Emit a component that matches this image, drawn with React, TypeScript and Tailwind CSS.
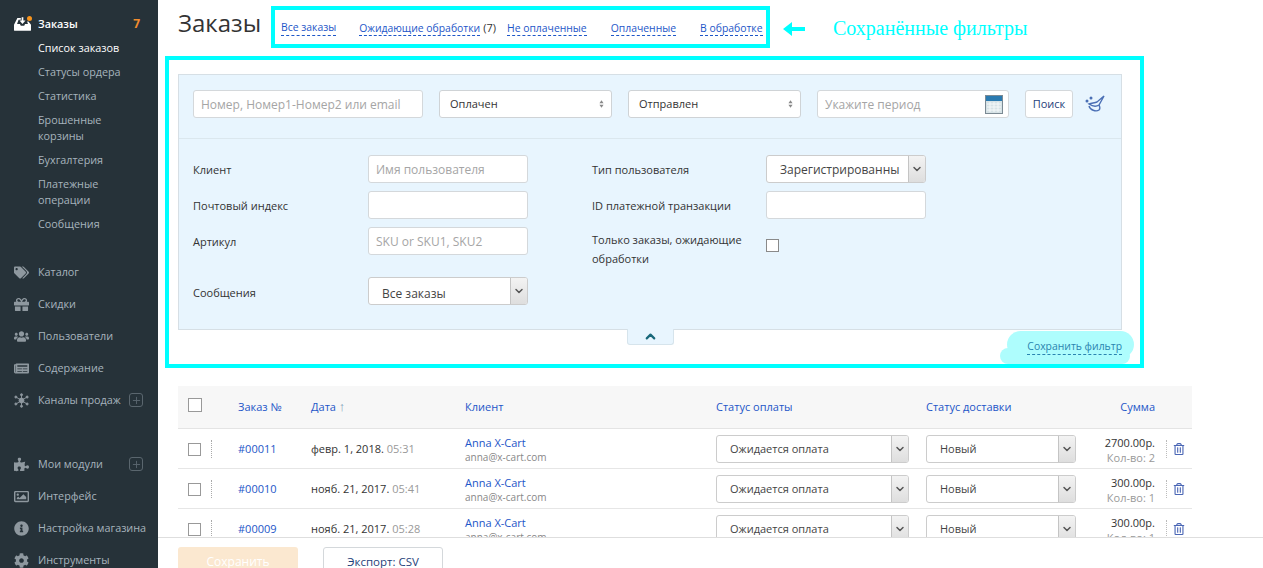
import { FaTags, FaGift, FaUsers, FaNewspaper, FaPuzzlePiece, FaRegImage, FaInfoCircle, FaCog, FaRegTrashAlt } from 'react-icons/fa'
import { ChevronDown, ChevronUp, Plus } from 'lucide-react'
import type { ReactNode } from 'react'

const subItems = [
  { label: 'Список заказов', active: true },
  { label: 'Статусы ордера' },
  { label: 'Статистика' },
  { label: 'Брошенные корзины' },
  { label: 'Бухгалтерия' },
  { label: 'Платежные операции' },
  { label: 'Сообщения' },
]

const orders = [
  { id: '#00011', date: 'февр. 1, 2018.', time: '05:31', sum: '2700.00р.', qty: 'Кол-во: 2' },
  { id: '#00010', date: 'нояб. 21, 2017.', time: '05:41', sum: '300.00р.', qty: 'Кол-во: 1' },
  { id: '#00009', date: 'нояб. 21, 2017.', time: '05:28', sum: '300.00р.', qty: 'Кол-во: 1' },
]

function InboxIcon() {
  return (
    <svg viewBox="0 0 20 16" className="w-[17px] h-[14px] fill-white">
      <path d="M4 1h4v2H5.4L3.6 8H7l1 2h4l1-2h3.4l-1-3H17l3 4v6a1 1 0 0 1-1 1H1a1 1 0 0 1-1-1V9z" />
      <path d="M9 0h2v4h2.5L10 8 6.500 4H9z" />
    </svg>
  )
}

function ChannelsIcon() {
  return (
    <svg viewBox="0 0 16 16" className="w-[15px] h-[15px] fill-current stroke-current" strokeWidth="1">
      <circle cx="8" cy="8" r="2.600" />
      <path d="M8 8V2M8 8v6M8 8L2.500 4.500M8 8l5.500-3.500M8 8l-5.500 3.500M8 8l5.500 3.500" />
      <circle cx="8" cy="1.800" r="1.100" />
      <circle cx="8" cy="14.200" r="1.100" />
      <circle cx="2" cy="4.300" r="1.100" />
      <circle cx="14" cy="4.300" r="1.100" />
      <circle cx="2" cy="11.700" r="1.100" />
      <circle cx="14" cy="11.700" r="1.100" />
    </svg>
  )
}

function MenuItem({ icon, label, plus }: { icon: ReactNode; label: string; plus?: boolean }) {
  return (
    <div className="h-8 flex items-center text-[#a7b4bd]">
      <div className="w-[38px] pl-[14px] text-[#8e989f] text-[15px] shrink-0">{icon}</div>
      <span className="whitespace-nowrap">{label}</span>
      {plus && (
        <span className="ml-auto mr-[15px] w-[14px] h-[14px] border border-[#5a666e] rounded-[3px] flex items-center justify-center text-[#5a666e]">
          <Plus size={11} />
        </span>
      )}
    </div>
  )
}

function Sidebar() {
  return (
    <aside className="w-[158px] shrink-0 h-full bg-[#263239] pt-2 overflow-hidden text-[10.8px] leading-4">
      <div className="h-8 flex items-center text-white font-semibold">
        <div className="relative w-[38px] pl-[14px] shrink-0">
          <InboxIcon />
          <span className="absolute left-[27px] top-[-1px] w-[5px] h-[5px] rounded-full bg-[#f7941d]" />
        </div>
        <span>Заказы</span>
        <span className="ml-auto mr-[18px] text-[#f08c2e] font-bold text-[12px]">7</span>
      </div>
      <div className="-mt-1 mb-5 pl-[38px] pr-[30px]">
        {subItems.map((item) => (
          <div key={item.label} className={`py-1 ${item.active ? 'text-white' : 'text-[#a7b4bd]'}`}>
            {item.label}
          </div>
        ))}
      </div>
      <MenuItem icon={<FaTags />} label="Каталог" />
      <MenuItem icon={<FaGift />} label="Скидки" />
      <MenuItem icon={<FaUsers />} label="Пользователи" />
      <MenuItem icon={<FaNewspaper />} label="Содержание" />
      <MenuItem icon={<ChannelsIcon />} label="Каналы продаж" plus />
      <div className="h-8" />
      <MenuItem icon={<FaPuzzlePiece />} label="Мои модули" plus />
      <MenuItem icon={<FaRegImage />} label="Интерфейс" />
      <MenuItem icon={<FaInfoCircle />} label="Настройка магазина" />
      <MenuItem icon={<FaCog />} label="Инструменты" />
    </aside>
  )
}

function DashLink({ children }: { children: ReactNode }) {
  return <span className="text-[#1d56c8] text-[10.4px] border-b border-dashed border-[#1d56c8] leading-[15px] whitespace-nowrap">{children}</span>
}

function SmallSelect({ label, width }: { label: string; width: string }) {
  return (
    <div className={`${width} h-7 bg-white border border-[#cfd3d6] rounded-[3px] flex items-center justify-between pl-[10px] pr-[7px] text-[#333]`}>
      <span>{label}</span>
      <svg viewBox="0 0 6 9" className="w-[5px] h-[8px] fill-[#888]">
        <path d="M3 0l2.500 3.500h-5zM3 9L.5 5.500h5z" />
      </svg>
    </div>
  )
}

function ArrowSelect({ label, width, size = 'text-[11px]', pad = 'pt-px' }: { label: string; width: string; size?: string; pad?: string }) {
  return (
    <div className={`${width} ${size} h-7 bg-white border border-[#cccccc] rounded-[3px] flex items-stretch text-[#444] overflow-hidden shrink-0`}>
      <span className={`flex-1 pl-[13px] ${pad} flex items-center whitespace-nowrap overflow-hidden`}>{label}</span>
      <span className="w-[17px] shrink-0 bg-gradient-to-b from-[#f3f3f3] to-[#dedede] border-l border-[#c4c4c4] flex items-center justify-center text-[#555]">
        <ChevronDown size={12} strokeWidth={3} />
      </span>
    </div>
  )
}

function TextInput({ placeholder, width }: { placeholder?: string; width: string }) {
  return (
    <input
      placeholder={placeholder}
      className={`${width} text-[12px] h-7 bg-white border border-[#d4d8db] rounded-[3px] px-[7px] outline-none placeholder:text-[#a5a5a5]`}
    />
  )
}

function CalendarIcon() {
  return (
    <svg viewBox="0 0 18 20" className="absolute right-[6px] top-[4px] w-[18px] h-[20px]">
      <rect x="0.500" y="1.500" width="17" height="18" fill="#d6e2e6" stroke="#7b8a94" />
      <rect x="1" y="2" width="16" height="5" fill="#2a7ab0" />
      <path d="M2 10h14M2 13h14M2 16h14M5 8v10M9 8v10M13 8v10" stroke="#f4f8f9" />
    </svg>
  )
}

function BroomIcon() {
  return (
    <svg viewBox="0 0 20 20" className="w-5 h-5 -ml-1 fill-none stroke-[#4a6fb5]" strokeWidth="1.400">
      <path d="M4 10c3 2 7 3 10 1l5-9-7 6c-2 1-5 1-8 2z" />
      <path d="M4 12c1 4 7 6 10 4 1-1 1-3 0-5" />
      <circle cx="2" cy="7" r=".8" />
      <circle cx="6" cy="4" r=".8" />
    </svg>
  )
}

function FilterPanel() {
  return (
    <div className="ml-[7px] w-[979px] h-[312px] border-4 border-[#00ffff] pt-[14px] pl-[9px] pr-[18px] relative">
      <div className="h-[256px] bg-[#e8f5fe] border border-[#d6dfe5]">
        <div className="h-[64px] flex items-start pt-[15px] pl-[14px] gap-4 border-b border-[#dbe7ee]">
          <TextInput placeholder="Номер, Номер1-Номер2 или email" width="w-[230px]" />
          <SmallSelect label="Оплачен" width="w-[173px]" />
          <SmallSelect label="Отправлен" width="w-[173px]" />
          <div className="relative w-[192px]">
            <TextInput placeholder="Укажите период" width="w-full" />
            <CalendarIcon />
          </div>
          <div className="w-12 h-7 bg-white border border-[#d4d8db] rounded-[3px] flex items-center justify-center text-[#1f3f7a]">Поиск</div>
          <div className="h-7 flex items-center"><BroomIcon /></div>
        </div>
        <div className="flex pl-[14px] pt-4 text-[#333]">
          <div className="w-[399px] flex flex-col gap-2">
            <div className="flex items-center h-7">
              <span className="w-[175px] pt-0.5">Клиент</span>
              <TextInput placeholder="Имя пользователя" width="w-[160px]" />
            </div>
            <div className="flex items-center h-7">
              <span className="w-[175px] pt-0.5">Почтовый индекс</span>
              <TextInput width="w-[160px]" />
            </div>
            <div className="flex items-center h-7">
              <span className="w-[175px] pt-0.5">Артикул</span>
              <TextInput placeholder="SKU or SKU1, SKU2" width="w-[160px]" />
            </div>
            <div className="flex items-center h-7 mt-[14px]">
              <span className="w-[175px] pt-[5px]">Сообщения</span>
              <ArrowSelect label="Все заказы" width="w-[160px]" size="text-[12px]" pad="pt-[5px]" />
            </div>
          </div>
          <div className="flex flex-col gap-2">
            <div className="flex items-center h-7">
              <span className="w-[174px] pt-0.5">Тип пользователя</span>
              <ArrowSelect label="Зарегистрированны" width="w-[160px]" size="text-[12px]" pad="pt-[2px]" />
            </div>
            <div className="flex items-center h-7">
              <span className="w-[174px] pt-0.5">ID платежной транзакции</span>
              <TextInput width="w-[160px]" />
            </div>
            <div className="flex items-start pt-[3px]">
              <span className="w-[174px] leading-[19px] pr-4">Только заказы, ожидающие обработки</span>
              <span className="mt-[9px] w-[13px] h-[13px] bg-white border border-[#8a8a8a]" />
            </div>
          </div>
        </div>
      </div>
      <div className="relative w-[47px] h-4 ml-[449px] -mt-px bg-[#e8f5fe] border border-t-0 border-[#d6e4ec] rounded-b-[3px] flex items-center justify-center text-[#19687a]">
        <ChevronUp size={15} strokeWidth={3.500} />
      </div>
      {/* brush mark over the save link */}
      <div className="absolute left-[838px] top-[271px] w-[127px] h-[27px] rounded-[14px] bg-[#aefdfd]" />
      <div className="absolute left-[831px] top-[288px] w-[130px] h-[16px] rounded-[8px] bg-[#aefdfd]" />
      <span className="absolute right-[18px] top-[279px] text-[#2a84b0] text-[10.4px] leading-[15px] border-b border-dashed border-[#2a84b0] whitespace-nowrap">
        Сохранить фильтр
      </span>
    </div>
  )
}

function OrdersTable() {
  const cols = 'grid grid-cols-[60px_73px_154px_251px_210px_160px_69px_37px] items-center'
  return (
    <div className="ml-5 mt-[18px] w-[1014px]">
      <div className={`${cols} h-[43px] bg-[#f7f7f7] border-b border-[#e4e4e4] text-[#1d56c8]`}>
        <div className="pl-[10px]">
          <span className="block w-[14px] h-[14px] -mt-1 bg-white border border-[#999]" />
        </div>
        <div>Заказ №</div>
        <div>Дата <span className="text-[#7a9bb5] text-[13px] leading-none">↑</span></div>
        <div>Клиент</div>
        <div>Статус оплаты</div>
        <div>Статус доставки</div>
        <div className="text-right">Сумма</div>
      </div>
      {orders.map((o) => (
        <div key={o.id} className={`${cols} h-10 pt-px border-b border-[#e6e6e6]`}>
          <div className="flex items-center pl-[10px] gap-[10px]">
            <span className="w-[13px] h-[13px] bg-white border border-[#999]" />
            <span className="h-[18px] border-l border-dotted border-[#aaa]" />
          </div>
          <div className="text-[#1d56c8]">{o.id}</div>
          <div className="text-[#333] whitespace-nowrap">
            {o.date} <span className="text-[#999]">{o.time}</span>
          </div>
          <div className="leading-[14px] pt-px">
            <div className="text-[#1d56c8]">Anna X-Cart</div>
            <div className="text-[#888] text-[10px]">anna@x-cart.com</div>
          </div>
          <ArrowSelect label="Ожидается оплата" width="w-[193px]" />
          <ArrowSelect label="Новый" width="w-[150px]" />
          <div className="text-right leading-[15px] whitespace-nowrap pt-px">
            <div className="text-[#333]">{o.sum}</div>
            <div className="text-[#999]">{o.qty}</div>
          </div>
          <div className="flex items-center pl-[11px] gap-[6px]">
            <span className="h-[18px] border-l border-dotted border-[#bbb]" />
            <FaRegTrashAlt className="text-[#4a66b5] text-[12px]" />
          </div>
        </div>
      ))}
    </div>
  )
}

export default function App() {
  return (
    <div className="w-[1263px] h-[568px] flex overflow-hidden bg-white font-['Open_Sans',sans-serif] text-[11px]">
      <Sidebar />
      <main className="flex-1 min-w-0 flex flex-col h-full">
        <div className="flex-1 min-h-0 overflow-hidden">
          <div className="h-[56px] flex items-start pt-[6px]">
            <h1 className="ml-5 w-[93px] text-[24px] leading-[34px] text-[#333]">Заказы</h1>
            <div className="w-[499px] h-[42px] border-4 border-[#00ffff] flex items-center pl-[6px] pt-[2px]">
              <DashLink>Все заказы</DashLink>
              <span className="ml-[23px]"><DashLink>Ожидающие обработки</DashLink></span>
              <span className="ml-[3px] text-[#333]">(7)</span>
              <span className="ml-[11px]"><DashLink>Не оплаченные</DashLink></span>
              <span className="ml-6"><DashLink>Оплаченные</DashLink></span>
              <span className="ml-6"><DashLink>В обработке</DashLink></span>
            </div>
            <svg viewBox="0 0 22 14" className="ml-[13px] mt-[16px] w-[22px] h-[14px] fill-[#00ffff]">
              <path d="M0 7l9-7v5h13v4H9v5z" />
            </svg>
            <span className="ml-[28px] mt-[9px] text-[20px] leading-[26px] text-[#00ffff] font-['Liberation_Serif',serif] whitespace-nowrap">
              Сохранённые фильтры
            </span>
          </div>
          <FilterPanel />
          <OrdersTable />
        </div>
        <div className="h-[31px] shrink-0 border-t border-[#dedede] bg-white pl-5 pt-[9px] flex gap-[25px] overflow-hidden">
          <div className="w-[120px] h-[30px] bg-[#fbe8d0] rounded-[3px] text-white text-[12px] flex items-center justify-center">Сохранить</div>
          <div className="w-[120px] h-[30px] bg-white border border-[#d4d8db] rounded-[3px] text-[#1f3f7a] text-[11.5px] flex items-center justify-center">Экспорт: CSV</div>
        </div>
      </main>
    </div>
  )
}
